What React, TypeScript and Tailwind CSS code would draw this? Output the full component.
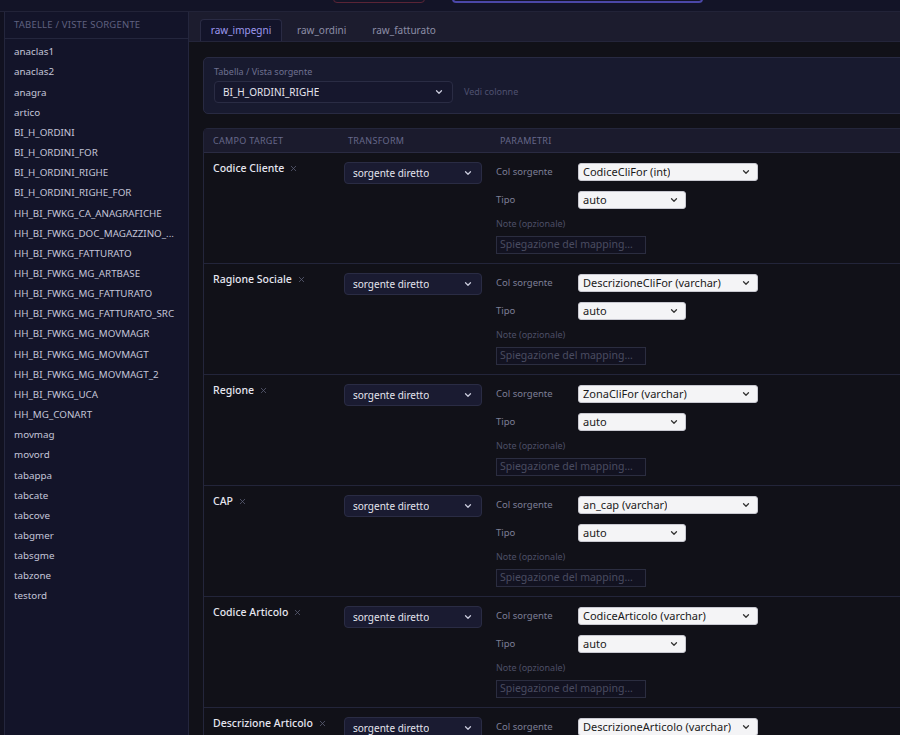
import { ChevronDown, X } from "lucide-react";

const sources = [
  "anaclas1", "anaclas2", "anagra", "artico",
  "BI_H_ORDINI", "BI_H_ORDINI_FOR", "BI_H_ORDINI_RIGHE", "BI_H_ORDINI_RIGHE_FOR",
  "HH_BI_FWKG_CA_ANAGRAFICHE", "HH_BI_FWKG_DOC_MAGAZZINO_...", "HH_BI_FWKG_FATTURATO",
  "HH_BI_FWKG_MG_ARTBASE", "HH_BI_FWKG_MG_FATTURATO", "HH_BI_FWKG_MG_FATTURATO_SRC",
  "HH_BI_FWKG_MG_MOVMAGR", "HH_BI_FWKG_MG_MOVMAGT", "HH_BI_FWKG_MG_MOVMAGT_2",
  "HH_BI_FWKG_UCA", "HH_MG_CONART", "movmag", "movord", "tabappa", "tabcate",
  "tabcove", "tabgmer", "tabsgme", "tabzone", "testord",
];

const mappings = [
  { target: "Codice Cliente", col: "CodiceCliFor (int)" },
  { target: "Ragione Sociale", col: "DescrizioneCliFor (varchar)" },
  { target: "Regione", col: "ZonaCliFor (varchar)" },
  { target: "CAP", col: "an_cap (varchar)" },
  { target: "Codice Articolo", col: "CodiceArticolo (varchar)" },
  { target: "Descrizione Articolo", col: "DescrizioneArticolo (varchar)" },
];

const tabs = ["raw_impegni", "raw_ordini", "raw_fatturato"];

function DarkSelect({ value, className }: { value: string; className?: string }) {
  return (
    <div className={`flex items-center justify-between rounded border border-[#2a2c44] bg-[#1a1b31] pl-2 pr-2 text-[10px] text-[#e4e4ee] ${className ?? ""}`}>
      <span className="truncate">{value}</span>
      <ChevronDown size={10} strokeWidth={3} className="text-[#c9cadb]" />
    </div>
  );
}

function LightSelect({ value, className }: { value: string; className?: string }) {
  return (
    <div className={`flex h-[18px] items-center justify-between rounded-[3px] border border-[#c8c8d0] bg-[#f4f4f6] pl-[4px] pr-[6px] text-[11px] text-[#1a1a1a] ${className ?? ""}`}>
      <span className="truncate">{value}</span>
      <ChevronDown size={10} strokeWidth={3} className="text-[#333]" />
    </div>
  );
}

function MappingRow({ target, col }: { target: string; col: string }) {
  return (
    <div className="grid grid-cols-[131px_152px_1fr] items-start border-b border-[#23253a] pl-[9px] pt-[9px] pb-[9px]">
      <div className="flex h-[12px] items-center gap-[5px] pt-[1px] text-[10.5px] font-medium text-[#e6e6f0]">
        <span>{target}</span>
        <X size={9} strokeWidth={2} className="text-[#5f6178]" />
      </div>
      <div>
        <DarkSelect value="sorgente diretto" className="h-[22px] w-[138px]" />
      </div>
      <div className="flex flex-col">
        <div className="mt-[1px] flex items-center">
          <span className="w-[82px] text-[9.5px] text-[#7d7f96]">Col sorgente</span>
          <LightSelect value={col} className="w-[180px]" />
        </div>
        <div className="mt-[10px] flex items-center">
          <span className="w-[82px] text-[9.5px] text-[#7d7f96]">Tipo</span>
          <LightSelect value="auto" className="w-[108px]" />
        </div>
        <div className="mt-[9px] text-[9px] leading-[12px] text-[#4d4f66]">Note (opzionale)</div>
        <div className="mt-[6px] flex h-[18px] w-[150px] items-center border border-[#2b2d40] bg-[#121220] px-[3px] text-[10.5px] text-[#4a4c61]">
          Spiegazione del mapping...
        </div>
      </div>
    </div>
  );
}

export default function App() {
  return (
    <div className="flex h-[735px] w-[900px] flex-col overflow-hidden bg-[#111120] font-['Noto_Sans',sans-serif]">
      {/* header strip, scrolled mostly out of view */}
      <div className="flex h-[12px] shrink-0 items-end overflow-hidden border-b border-[#222338] bg-[#131427] pb-[8px] pl-[333px]">
        <div className="h-[16px] w-[92px] rounded-[4px] border border-[#5a2436]" />
        <div className="ml-[27px] h-[16px] w-[251px] rounded-[4px] border-2 border-[#4b47a8]" />
        <div className="mb-[6px] ml-[8px] w-[98px] border-b border-dotted border-[#4a2035]" />
      </div>

      <div className="flex min-h-0 flex-1">
        {/* source tables */}
        <aside className="ml-[4px] flex w-[185px] shrink-0 flex-col border-x border-[#24263d] bg-[#131429]">
          <div className="border-b border-[#24263d] pl-[9px] pt-[6px] pb-[6px] text-[9.5px] uppercase tracking-[0.2px] text-[#5f6180]">
            Tabelle / Viste sorgente
          </div>
          <ul className="pt-[3px]">
            {sources.map((s) => (
              <li key={s} className="whitespace-nowrap pl-[9px] text-[9.8px] leading-[20.15px] text-[#c3c5d8]">
                {s}
              </li>
            ))}
          </ul>
        </aside>

        <main className="flex min-w-0 flex-1 flex-col bg-[#111118]">
          <div className="flex h-[30px] shrink-0 items-end gap-[4px] border-b border-[#24253a] bg-[#1c1c2e] pl-[11px]">
            {tabs.map((t, i) => (
              <div
                key={t}
                className={
                  i === 0
                    ? "flex h-[22px] w-[82px] items-center justify-center rounded-t-[4px] border border-b-0 border-[#2a2b44] bg-[#13142a] text-[10px] text-[#9d98ee]"
                    : "flex h-[22px] items-center px-[11px] text-[10px] text-[#8c8ea6]"
                }
              >
                {t}
              </div>
            ))}
          </div>

          <div className="flex w-[760px] flex-col gap-[14px] pl-[14px] pt-[15px]">
            <section className="flex h-[57px] flex-col rounded-[5px] border border-[#282a42] bg-[#181a2f] pl-[10px] pt-[8px]">
              <span className="text-[9px] leading-[12px] text-[#6e7090]">Tabella / Vista sorgente</span>
              <div className="mt-[3px] flex items-center">
                <DarkSelect value="BI_H_ORDINI_RIGHE" className="h-[22px] w-[239px] bg-[#16172d] text-[10px]" />
                <span className="ml-[11px] text-[9px] text-[#4f5170]">Vedi colonne</span>
              </div>
            </section>

            <section className="flex flex-col rounded-t-[5px] border border-b-0 border-[#24263b]">
              <div className="grid h-[24px] grid-cols-[131px_152px_1fr] items-center border-b border-[#2a2b42] bg-[#1b1b2d] pl-[9px] text-[9px] uppercase tracking-[0.3px] text-[#66688a]">
                <span>Campo target</span>
                <span className="pl-[4px]">Transform</span>
                <span className="pl-[4px]">Parametri</span>
              </div>
              {mappings.map((m) => (
                <MappingRow key={m.target} target={m.target} col={m.col} />
              ))}
            </section>
          </div>
        </main>
      </div>
    </div>
  );
}
